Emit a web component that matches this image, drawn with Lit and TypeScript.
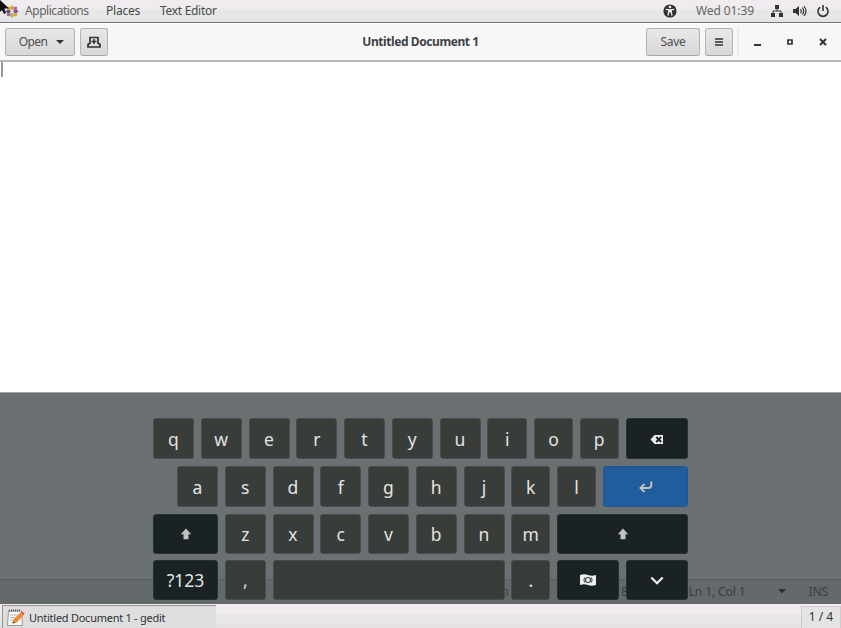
import { LitElement, html, css, svg } from "lit";
import { customElement } from "lit/decorators.js";

type Key = { w: number; label?: string; icon?: string; kind?: string };

const letters = (chars: string, widths: number[]): Key[] =>
  chars.split("").map((label, i) => ({ label, w: widths[i] }));

const ROWS: { indent: number; keys: Key[] }[] = [
  {
    indent: 0,
    keys: [
      ...letters("qwertyuiop", [41, 41, 41, 41, 41, 41, 41, 40, 39, 39]),
      { w: 62, icon: "backspace", kind: "dark" },
    ],
  },
  {
    indent: 24,
    keys: [
      ...letters("asdfghjkl", [41, 41, 41, 41, 41, 41, 41, 39, 39]),
      { w: 85.5, icon: "enter", kind: "blue" },
    ],
  },
  {
    indent: 0,
    keys: [
      { w: 65, icon: "shift", kind: "dark" },
      ...letters("zxcvbnm", [41, 41, 41, 41, 41, 41, 39]),
      { w: 131, icon: "shift", kind: "dark" },
    ],
  },
  {
    indent: 0,
    keys: [
      { w: 65, label: "?123", kind: "dark" },
      { w: 41, label: "," },
      { w: 232, label: "" },
      { w: 39, label: "." },
      { w: 62, icon: "flag", kind: "dark" },
      { w: 62, icon: "down", kind: "dark" },
    ],
  },
];

const KEY_ICONS: Record<string, unknown> = {
  backspace: svg`<path d="M1.500 8.500 5.500 4H14v9H5.500z" fill="#eeeeec"/><path d="M7.200 6l5 5m0-5-5 5" stroke="#1b2224" stroke-width="1.800"/>`,
  enter: svg`<path d="M13.300 2.500V6q0 3-3 3H4" fill="none" stroke="#bfc1bc" stroke-width="2"/><path d="M6.500 5 2.500 9l4 4" fill="none" stroke="#bfc1bc" stroke-width="2"/>`,
  shift: svg`<path d="M8 2.500 13.200 8.300H10.500v5h-5v-5H2.800z" fill="#c2c2c0"/>`,
  flag: svg`<path d="M0 3q4-1.500 8 0t8 0v10q-4 1.500-8 0t-8 0z" fill="#eeeeec"/><circle cx="8" cy="8" r="2.500" fill="none" stroke="#3a4042" stroke-width="1.100"/><path d="M4.600 5.500q-1.400 2.500 0 5M11.400 5.500q1.400 2.500 0 5" fill="none" stroke="#3a4042"/>`,
  down: svg`<path d="M2.300 5.500 8 11.200l5.700-5.700" fill="none" stroke="#eeeeec" stroke-width="2.200"/>`,
};

@customElement("app-root")
export class AppRoot extends LitElement {
  static styles = css`
    :host {
      display: flex;
      flex-direction: column;
      position: relative;
      width: 841px;
      height: 628px;
      overflow: hidden;
      box-sizing: border-box;
      background: #fff;
      color: #2e3436;
      font: 12px/16px "Noto Sans", "Open Sans", sans-serif;
      white-space: nowrap;
    }
    * { box-sizing: border-box; }
    svg { display: block; flex: none; }
    .panel {
      height: 23px;
      display: flex;
      align-items: center;
      padding: 0 11px 0 5px;
      background: linear-gradient(#efebee 0 9px, #e7e7e7 10px 18px, #e6e1e4 19px);
      border-bottom: 1px solid #6e7373;
      color: #454b4c;
    }
    .apps { margin-left: 6px; width: 81px; color: #606465; letter-spacing: -0.45px; }
    .places { width: 54px; letter-spacing: -0.2px; }
    .editor-menu { letter-spacing: -0.3px; }
    .grow { flex: 1; }
    .clock { margin: 0 15px 0 19px; width: 59px; color: #606465; letter-spacing: -0.1px; }
    .tray { display: flex; gap: 9px; }
    .cursor { position: absolute; left: 0; top: 0; }
    .header {
      height: 39px;
      display: grid;
      grid-template-columns: 1fr auto 1fr;
      align-items: center;
      padding: 0 10px 1px 10px;
      background: #f7f7f7;
      border-top: 1px solid #fff;
      border-bottom: 2px solid #b9b4b7;
    }
    .side { display: flex; align-items: center; margin-left: -5px; }
    .right { justify-content: flex-end; margin-left: 0; }
    .btn {
      height: 28px;
      display: flex;
      align-items: center;
      justify-content: center;
      border: 1px solid #b5b2b3;
      border-bottom-color: #a6a3a4;
      border-radius: 3px;
      background: linear-gradient(#e9e8e8, #d8d6d6);
      color: #4a5051;
    }
    .open { width: 70px; gap: 9px; padding-left: 3px; letter-spacing: -0.6px; }
    .new { width: 28px; margin-left: 5px; }
    .save { width: 54px; letter-spacing: -0.25px; }
    .menu { width: 28px; margin-left: 5px; }
    .sep { width: 2px; height: 28px; margin: 0 10px 0 4px; background: #ececec; }
    .wins { display: flex; gap: 17px; }
    .title { font-weight: 700; color: #3d4345; letter-spacing: -0.42px; }
    .editor { height: 330px; background: #fff; padding: 0 1px; }
    .caret { width: 2px; height: 15px; background: #999; }
    .osk {
      height: 212px;
      position: relative;
      background: #6b7073;
      border-top: 1px solid #a2a5a6;
      padding: 25px 0 0 153px;
    }
    .status {
      position: absolute;
      left: 0;
      right: 0;
      bottom: 0;
      height: 25px;
      display: flex;
      align-items: center;
      justify-content: flex-end;
      padding: 0 13px 1px 0;
      background: #64696b;
      border-top: 1px solid #575c5e;
      color: #383e40;
      letter-spacing: -0.1px;
    }
    .lang { margin-right: 25px; }
    .tab { margin-right: 61px; }
    .pos { margin-right: 32px; }
    .ins { margin-left: 23px; }
    .keys { position: relative; display: flex; flex-direction: column; gap: 7px; }
    .row { display: flex; height: 41px; gap: 6.750px; }
    .row + .row + .row { height: 40px; }
    .row + .row + .row + .row { margin-top: -1px; }
    .key {
      flex: none;
      display: flex;
      align-items: center;
      justify-content: center;
      background: #393d39;
      border: 1px solid #435050;
      border-radius: 3px;
      color: #e4e4e2;
      font-size: 17.500px;
      line-height: 24px;
    }
    .dark { background: #1b2224; border-color: #263134; }
    .blue { background: #215d9c; border-color: #1d578f; }
    .tasks {
      height: 24px;
      display: flex;
      align-items: stretch;
      padding-left: 2px;
      background: linear-gradient(#efebee 0 10px, #e7e7e7 11px 19px, #e6e1e4 20px);
    }
    .task {
      width: 214px;
      margin-top: 1px;
      display: flex;
      align-items: center;
      gap: 4px;
      padding: 2px 0 0 4px;
      background: #dedede;
      border-top: 1px solid #929292;
      border-left: 1px solid #929292;
      font-size: 11px;
      letter-spacing: -0.26px;
    }
    .pager {
      width: 40px;
      margin-top: 2px;
      padding-top: 2px;
      text-align: center;
      border: 1px solid #cfcbcd;
      border-bottom: 0;
      background: #e5e3e4;
    }
  `;

  private key(k: Key) {
    return html`<div class="key ${k.kind ?? ""}" style="width:${k.w}px">${
      k.icon
        ? html`<svg width="16" height="16" viewBox="0 0 16 16">${KEY_ICONS[k.icon]}</svg>`
        : html`<span>${k.label}</span>`
    }</div>`;
  }

  render() {
    return html`
      <div class="panel">
        <svg width="14" height="13" viewBox="0 0 15 14">
          <path d="M7.500 0 10 3 7.500 6 5 3z" fill="#dfa63d"/><path d="M14.500 7 11.500 9.500 8.500 7l3-2.500z" fill="#8a449b"/>
          <path d="M7.500 14 5 11l2.500-3L10 11z" fill="#a4c14c"/><path d="M.500 7 3.500 4.500 6.500 7l-3 2.500z" fill="#514d92"/>
          <path d="M2 2h3.500L6 5.500 2 5zM13 12H9.500L9 8.500l4 .500z" fill="#dfa63d"/><path d="M13 2v3.500L9 5.500 9.500 2zM2 12V8.500L6 8.500 5.500 12z" fill="#b367a6"/>
        </svg>
        <span class="apps">Applications</span><span class="places">Places</span><span class="editor-menu">Text Editor</span>
        <span class="grow"></span>
        <svg width="14" height="14" viewBox="0 0 14 14">
          <circle cx="7" cy="7" r="6.600" fill="#2e3436"/><circle cx="7" cy="3" r="1.300" fill="#eee"/>
          <path d="M2.800 5.300 5.800 5.800V8L5 11.500M11.200 5.300 8.200 5.800V8l.800 3.500" stroke="#eee" stroke-width="1.300" fill="none"/><path d="M5.500 5.300h3v3h-3z" fill="#eee"/>
        </svg>
        <span class="clock">Wed 01:39</span>
        <div class="tray">
          <svg width="14" height="14" viewBox="0 0 14 14"><path d="M5 1h4v4H5zM1 9h4v4H1zM9 9h4v4H9z" fill="#2e3436"/><path d="M7 5v2M3 9V7h8v2" fill="none" stroke="#2e3436"/></svg>
          <svg width="14" height="14" viewBox="0 0 14 14"><path d="M0 5h2.500L6 2v10L2.500 9H0z" fill="#2e3436"/><path d="M7.500 5q1.600 2 0 4M9.300 3.500q2.800 3.500 0 7M11 2q4 5 0 10" fill="none" stroke="#2e3436" stroke-width="1.200"/></svg>
          <svg width="14" height="14" viewBox="0 0 14 14"><path d="M4.200 3.200a5 5 0 1 0 5.600 0M7 1v6" fill="none" stroke="#2e3436" stroke-width="1.600"/></svg>
        </div>
      </div>
      <div class="header">
        <div class="side">
          <div class="btn open"><span>Open</span><svg width="8" height="5" viewBox="0 0 8 5"><path d="M0 1h8L4 5z" fill="#2e3436"/></svg></div>
          <div class="btn new"><svg width="14" height="14" viewBox="0 0 14 14"><path d="M3 9V2.500h8V9M3 8 1 9.500V12h12V9.500L11 8" fill="none" stroke="#2e3436" stroke-width="1.700"/><path d="M7 4v5M4.500 6.500h5" stroke="#2e3436" stroke-width="1.500"/></svg></div>
        </div>
        <span class="title">Untitled Document 1</span>
        <div class="side right">
          <div class="btn save">Save</div>
          <div class="btn menu"><svg width="10" height="10" viewBox="0 0 10 10"><path d="M1 2h8M1 5h8M1 8h8" stroke="#2e3436" stroke-width="1.600"/></svg></div>
          <span class="sep"></span>
          <div class="wins">
            <svg width="16" height="16" viewBox="0 0 16 16"><path d="M5 10h7v2H5z" fill="#2e3436"/></svg>
            <svg width="16" height="16" viewBox="0 0 16 16"><path d="M6 6h4v4H6z" fill="none" stroke="#2e3436" stroke-width="1.700"/></svg>
            <svg width="16" height="16" viewBox="0 0 16 16"><path d="M5 5l6 6m0-6-6 6" stroke="#2e3436" stroke-width="1.900"/></svg>
          </div>
        </div>
      </div>
      <div class="editor"><div class="caret"></div></div>
      <div class="osk">
        <div class="status">
          <span class="lang">Plain Text</span><span class="tab">Tab Width: 8</span><span class="pos">Ln 1, Col 1</span>
          <svg width="8" height="5" viewBox="0 0 8 5"><path d="M0 0h8L4 4.500z" fill="#2b3133"/></svg><span class="ins">INS</span>
        </div>
        <div class="keys">
          ${ROWS.map((r) => html`<div class="row" style="padding-left:${r.indent}px">${r.keys.map((k) => this.key(k))}</div>`)}
        </div>
      </div>
      <div class="tasks">
        <div class="task">
          <svg width="18" height="18" viewBox="0 0 18 18"><path d="M1.500 2h13l1 14.500H.500z" fill="#f6f6f4" stroke="#999"/><path d="M2 1.500h12" stroke="#555" stroke-width="2" stroke-dasharray="1 1"/><path d="M3 6h8M3 8.500h5M3 11h3" stroke="#bbb"/><path d="M5.500 14.500l1-4 7-7 3 3-7 7z" fill="#f08a2c"/><path d="M13.500 3.500l1.500-1.300 2.500 2.300L16.500 6.300z" fill="#d95757"/><path d="M5.500 14.500l.700-2.300 1.700 1.600z" fill="#333"/></svg>
          <span>Untitled Document 1 - gedit</span>
        </div>
        <span class="grow"></span>
        <div class="pager">1 / 4</div>
      </div>
      <svg class="cursor" width="9" height="15" viewBox="0 0 9 15"><path d="M0 0 9 8.500H4.500L6 13l-2 1-2-4-2 2z" fill="#111"/></svg>
    `;
  }
}
